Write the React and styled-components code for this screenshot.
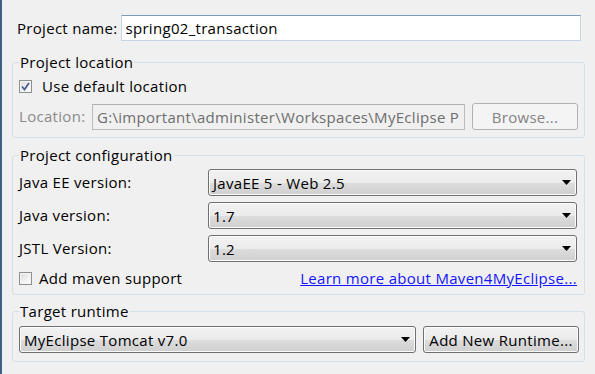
import React, { useState } from 'react';
import styled, { createGlobalStyle } from 'styled-components';

const GlobalStyle = createGlobalStyle`
  html, body {
    margin: 0;
    padding: 0;
    background: #f0f0f0;
  }
  body {
    font-family: "Open Sans", "Noto Sans", sans-serif;
    font-size: 15px;
    letter-spacing: 0.3px;
    color: #000;
  }
`;

const Page = styled.div`
  width: 595px;
  height: 374px;
  box-sizing: border-box;
  overflow: hidden;
  border-left: 2px solid #3d6189;
  padding: 15px 10px 0 10px;
  background: #f0f0f0;
`;

const NameRow = styled.div`
  display: flex;
  align-items: center;
  padding-left: 5px;
  padding-right: 4px;
`;

const Label = styled.span`
  flex: none;
  width: ${p => (p.width ? p.width + 'px' : 'auto')};
  color: ${p => (p.disabled ? '#8a8a8a' : '#000')};
  line-height: 19px;
  white-space: nowrap;
`;

const TextInput = styled.input`
  flex: ${p => (p.grow ? 1 : 'none')};
  width: ${p => (p.width ? p.width + 'px' : 'auto')};
  min-width: 0;
  height: 26px;
  box-sizing: border-box;
  margin-left: ${p => p.offset || 0}px;
  padding: 0 4px;
  font: inherit;
  letter-spacing: inherit;
  color: ${p => (p.disabled ? '#6d6d6d' : '#000')};
  background: ${p => (p.disabled ? '#f0f0f0' : '#fff')};
  border: 1px solid ${p => (p.disabled ? '#b9bdc1' : '#c5d5e6')};
  border-top-color: ${p => (p.disabled ? '#adb2b5' : '#7f9db9')};
  outline: none;
`;

const Group = styled.fieldset`
  margin: ${p => p.top}px 0 0 0;
  padding: ${p => p.pt}px 7px ${p => p.pb}px 6px;
  border: 1px solid #d7dfe6;
  border-radius: 3px;
  min-width: 0;
`;

const Legend = styled.legend`
  padding: 0 1px;
  margin-left: 0;
  line-height: 19px;
`;

const CheckRow = styled.label`
  display: flex;
  align-items: center;
  height: 20px;
  gap: ${p => p.gap || 10}px;
`;

const Box = styled.span`
  width: 13px;
  height: 13px;
  box-sizing: border-box;
  border: 1px solid #8e8f8f;
  background: linear-gradient(135deg, #dcdcdc 0%, #f6f6f6 70%, #fdfdfd 100%);
  box-shadow: inset 0 0 0 1px #f4f4f4;
  display: flex;
  align-items: center;
  justify-content: center;
  flex: none;
`;

const Row = styled.div`
  display: flex;
  align-items: center;
  gap: 7px;
  margin-top: ${p => p.top || 0}px;
`;

const Button = styled.button`
  flex: none;
  width: ${p => p.width}px;
  height: 27px;
  box-sizing: border-box;
  font: inherit;
  letter-spacing: inherit;
  padding: 0;
  border: 1px solid ${p => (p.disabled ? '#adb2b5' : '#707070')};
  border-radius: 3px;
  color: ${p => (p.disabled ? '#838383' : '#000')};
  background: ${p =>
    p.disabled
      ? '#f4f4f4'
      : 'linear-gradient(#f2f2f2 0%, #ebebeb 50%, #dddddd 51%, #cfcfcf 100%)'};
  box-shadow: inset 0 0 0 1px ${p => (p.disabled ? '#f4f4f4' : '#fcfcfc')};
`;

const ConfigGrid = styled.div`
  display: grid;
  grid-template-columns: 189px 1fr;
  row-gap: 6px;
  align-items: center;
`;

const Select = styled.div`
  display: flex;
  align-items: center;
  justify-content: space-between;
  width: ${p => (p.width ? p.width + 'px' : 'auto')};
  flex: none;
  height: 27px;
  box-sizing: border-box;
  padding: 0 5px 0 4px;
  border: 1px solid #707070;
  border-radius: 3px;
  background: linear-gradient(#f2f2f2 0%, #ebebeb 50%, #dddddd 51%, #cfcfcf 100%);
  box-shadow: inset 0 0 0 1px #fcfcfc;
`;

const MavenRow = styled.div`
  display: flex;
  align-items: center;
  justify-content: space-between;
  margin-top: 6px;
`;

const Link = styled.a`
  color: #1414ff;
  text-decoration: underline;
  line-height: 19px;
  cursor: pointer;
`;

const Clipped = styled.div`
  margin-top: 8px;
  padding-left: 76px;
  line-height: 19px;
`;

function Check({ checked }) {
  return (
    <Box>
      {checked && (
        <svg width="9" height="9" viewBox="0 0 9 9">
          <path d="M1 4.5 L3.5 7.5 L8 1" fill="none" stroke="#4a5e96" strokeWidth="1.8" />
        </svg>
      )}
    </Box>
  );
}

function Arrow() {
  return (
    <svg width="9" height="5" viewBox="0 0 9 5">
      <path d="M0 0 H9 L4.5 5 Z" fill="#000" />
    </svg>
  );
}

function Dropdown({ value, width }) {
  return (
    <Select width={width}>
      <span>{value}</span>
      <Arrow />
    </Select>
  );
}

export default function App() {
  const [name, setName] = useState('spring02_transaction');

  return (
    <Page>
      <GlobalStyle />
      <NameRow>
        <Label>Project name:</Label>
        <TextInput grow offset={3} value={name} onChange={e => setName(e.target.value)} />
      </NameRow>

      <Group top={12} pt={4} pb={7}>
        <Legend>Project location</Legend>
        <CheckRow>
          <Check checked />
          <Label>Use default location</Label>
        </CheckRow>
        <Row top={7}>
          <Label disabled width={66}>Location:</Label>
          <TextInput disabled width={373} value="G:\important\administer\Workspaces\MyEclipse Professional 2014" readOnly />
          <Button disabled width={106}>Browse...</Button>
        </Row>
      </Group>

      <Group top={8} pt={4} pb={6}>
        <Legend>Project configuration</Legend>
        <ConfigGrid>
          <Label>Java EE version:</Label>
          <Dropdown value="JavaEE 5 - Web 2.5" />
          <Label>Java version:</Label>
          <Dropdown value="1.7" />
          <Label>JSTL Version:</Label>
          <Dropdown value="1.2" />
        </ConfigGrid>
        <MavenRow>
          <CheckRow gap={7}>
            <Check />
            <Label>Add maven support</Label>
          </CheckRow>
          <Link>Learn more about Maven4MyEclipse...</Link>
        </MavenRow>
      </Group>

      <Group top={7} pt={5} pb={8}>
        <Legend>Target runtime</Legend>
        <Row>
          <Dropdown value="MyEclipse Tomcat v7.0" width={397} />
          <Button width={156}>Add New Runtime...</Button>
        </Row>
      </Group>

      <Clipped>Deploy build</Clipped>
    </Page>
  );
}
